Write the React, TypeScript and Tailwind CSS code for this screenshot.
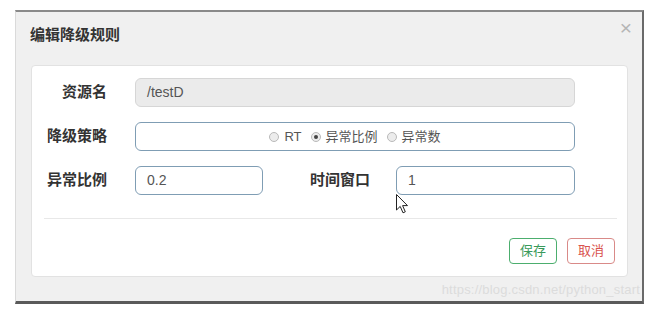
import React from 'react';

const FONT = "font-['Liberation_Sans','Noto_Sans_CJK_SC',sans-serif]";

function Radio({ checked, label }: { checked?: boolean; label: string }) {
  return (
    <span className="flex items-center gap-[5px]">
      <span className="w-[10px] h-[10px] rounded-full border border-[#b9b9b9] bg-[#ececec] flex items-center justify-center">
        {checked && <span className="w-[4px] h-[4px] rounded-full bg-[#444]" />}
      </span>
      <span className="text-[13px] text-[#555]">{label}</span>
    </span>
  );
}

function Label({ children, className = '' }: { children: React.ReactNode; className?: string }) {
  return <div className={`text-[15px] font-bold text-[#333] ${className}`}>{children}</div>;
}

export default function App() {
  return (
    <div className={`w-[650px] h-[309px] bg-white relative overflow-hidden pt-[10px] pl-[15px] ${FONT}`}>
      {/* Modal */}
      <div className="w-[629px] h-[294px] bg-[#f0f0f0] border-t-2 border-t-[#8a8a8a] border-r-2 border-r-[#6a6a6a] border-b-[3px] border-b-[#5a5a5a] border-l border-l-[#dadada] flex flex-col">
        {/* Header */}
        <div className="h-[53px] flex items-start justify-between pl-[14px] pr-[10px]">
          <h4 className="pt-[14px] leading-[18px] text-[15px] font-bold text-[#333]">编辑降级规则</h4>
          <button className="pt-[7px] text-[#b5b5b5] text-[21px] leading-[18px] font-light">×</button>
        </div>

        {/* Body */}
        <div className="ml-[15px] w-[597px] h-[212px] bg-white rounded-[4px] border border-[#e2e2e2] flex flex-col pt-[12px]">
          <div className="flex items-center h-[29px]">
            <Label className="w-[75px] text-right">资源名</Label>
            <div className="ml-[28px] w-[440px] h-[29px] rounded-[6px] border border-[#d6d6d6] bg-[#ebebeb] flex items-center px-[11px] text-[14px] text-[#555]">
              /testD
            </div>
          </div>

          <div className="flex items-center h-[29px] mt-[15px]">
            <Label className="w-[75px] text-right">降级策略</Label>
            <div className="ml-[28px] w-[440px] h-[29px] rounded-[6px] border border-[#7f9db4] bg-white flex items-center justify-center gap-[9px]">
              <Radio label="RT" />
              <Radio checked label="异常比例" />
              <Radio label="异常数" />
            </div>
          </div>

          <div className="flex items-center h-[29px] mt-[15px]">
            <Label className="w-[75px] text-right">异常比例</Label>
            <div className="ml-[28px] w-[128px] h-[29px] rounded-[6px] border border-[#7f9db4] bg-white flex items-center px-[11px] text-[14px] text-[#555]">
              0.2
            </div>
            <Label className="ml-[47px]">时间窗口</Label>
            <div className="ml-[26px] w-[179px] h-[29px] rounded-[6px] border border-[#7f9db4] bg-white flex items-center px-[11px] text-[14px] text-[#555]">
              1
            </div>
          </div>

          <div className="mt-[23px] ml-[12px] mr-[10px] border-t border-[#e8e8e8]" />

          <div className="mt-[19px] flex justify-end gap-[10px] pr-[12px]">
            <button className="w-[48px] h-[26px] rounded-[4px] border border-[#4cae6e] text-[#3a9a5b] text-[13px] bg-white">保存</button>
            <button className="w-[48px] h-[26px] rounded-[4px] border border-[#d98a88] text-[#d9534f] text-[13px] bg-white">取消</button>
          </div>
        </div>

        {/* Watermark */}
        <div className="flex justify-end pr-[2px] pt-[6px]">
          <span className="text-[13px] leading-[14px] text-[#dcdcdc] tracking-[0.2px]">https://blog.csdn.net/python_start</span>
        </div>
      </div>

      {/* Mouse cursor */}
      <svg className="absolute left-[396px] top-[194px]" width="13" height="20" viewBox="0 0 13 20">
        <path d="M0.5 0.5 L0.5 16 L4.2 12.4 L7 18.8 L9.3 17.8 L6.6 11.6 L11.5 11.6 Z" fill="#fff" stroke="#222" strokeWidth="1" strokeLinejoin="round" />
      </svg>
    </div>
  );
}
